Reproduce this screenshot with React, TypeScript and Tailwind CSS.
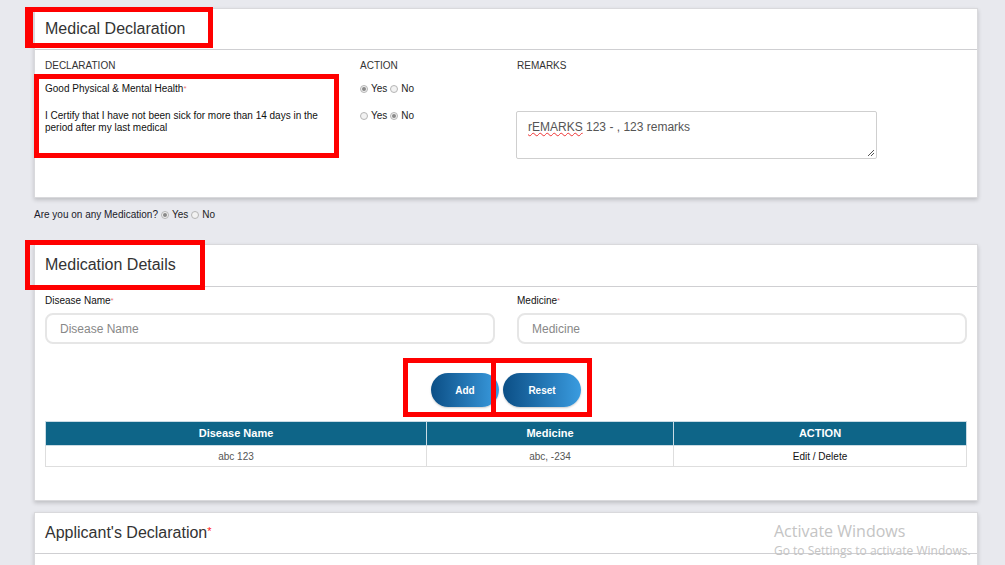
import React from "react";

function Radio({ checked }: { checked?: boolean }) {
  return (
    <span className="inline-flex h-[8px] w-[8px] items-center justify-center rounded-full border border-[#b5b5b5] bg-[#f2f2f2]">
      {checked && <span className="h-[4px] w-[4px] rounded-full bg-[#8a8a8a]" />}
    </span>
  );
}

function YesNo({ yes }: { yes: boolean }) {
  return (
    <div className="flex items-center text-[10px] leading-[12px] text-[#222]">
      <Radio checked={yes} />
      <span className="ml-[3px] mr-[3px]">Yes</span>
      <Radio checked={!yes} />
      <span className="ml-[3px]">No</span>
    </div>
  );
}

function Card({ children, className = "" }: { children: React.ReactNode; className?: string }) {
  return (
    <div className={`bg-white border border-[#d9d9dc] shadow-[0_2px_4px_rgba(0,0,0,0.18)] ${className}`}>
      {children}
    </div>
  );
}

function CardHeader({ children, h = "h-[41px]" }: { children: React.ReactNode; h?: string }) {
  return (
    <div className={`${h} flex items-center px-[10px] border-b border-[#cfcfd2] text-[16px] text-[#333]`}>
      {children}
    </div>
  );
}

function RedBox({ className }: { className: string }) {
  return <div className={`absolute border-[5px] border-[#ff0000] pointer-events-none ${className}`} />;
}

export default function App() {
  return (
    <div className="relative h-[565px] w-[1005px] overflow-hidden bg-[#e8e9ee] font-['Liberation_Sans',Arial,sans-serif]">
      <div className="pt-[8px] pl-[34px] pr-[27px]">
        {/* Medical Declaration */}
        <Card className="h-[190px]">
          <CardHeader>Medical Declaration</CardHeader>
          <div className="px-[10px] pt-[10px] text-[10px] leading-[12px] text-[#333]">
            <div className="grid grid-cols-[315px_157px_1fr]">
              <div>DECLARATION</div>
              <div>ACTION</div>
              <div>REMARKS</div>
            </div>
            <div className="mt-[11px] grid grid-cols-[315px_157px_1fr] text-[#111]">
              <div>
                Good Physical &amp; Mental Health<span className="text-[#e77] text-[8px] align-top">*</span>
              </div>
              <YesNo yes />
              <div />
            </div>
            <div className="mt-[15px] grid grid-cols-[315px_157px_1fr] text-[#111]">
              <div className="pr-[12px]">
                I Certify that I have not been sick for more than 14 days in the period after my last medical
              </div>
              <div>
                <YesNo yes={false} />
              </div>
              <div className="pt-[1px]">
                <div className="relative h-[48px] w-[361px] -ml-[1px] rounded-[2px] border border-[#cfcfcf] px-[11px] pt-[8px] text-[12px] leading-[14px] text-[#555]">
                  <span className="underline decoration-wavy decoration-[#e33] decoration-[1px]">rEMARKS</span> 123 - , 123 remarks
                  <svg className="absolute bottom-[1px] right-[1px]" width="8" height="8" viewBox="0 0 8 8">
                    <path d="M7 1 L1 7 M7 4 L4 7" stroke="#555" strokeWidth="1" />
                  </svg>
                </div>
              </div>
            </div>
          </div>
        </Card>

        {/* Medication question */}
        <div className="mt-[11px] flex items-center text-[10px] leading-[12px] text-[#1a1a2a]">
          <span className="mr-[3px]">Are you on any Medication?</span>
          <YesNo yes />
        </div>

        {/* Medication Details */}
        <Card className="mt-[23px] h-[257px]">
          <CardHeader h="h-[42px] pb-[2px]">Medication Details</CardHeader>
          <div className="px-[10px] pt-[8px]">
            <div className="grid grid-cols-2 gap-x-[22px]">
              <div>
                <div className="text-[10px] leading-[12px] text-[#111]">
                  Disease Name<span className="text-[#e77] text-[8px] align-top">*</span>
                </div>
                <div className="mt-[6px] flex h-[31px] items-center rounded-[8px] border-2 border-[#e6e6e6] px-[13px] text-[12px] text-[#888]">
                  Disease Name
                </div>
              </div>
              <div>
                <div className="text-[10px] leading-[12px] text-[#111]">
                  Medicine<span className="text-[#e77] text-[8px] align-top">*</span>
                </div>
                <div className="mt-[6px] flex h-[31px] items-center rounded-[8px] border-2 border-[#e6e6e6] px-[13px] text-[12px] text-[#888]">
                  Medicine
                </div>
              </div>
            </div>
            <div className="mt-[29px] flex justify-center gap-[4px]">
              <button className="h-[34px] w-[68px] rounded-full bg-gradient-to-r from-[#0b4f86] to-[#3a9ce0] text-[10px] font-bold text-white shadow-[0_1px_2px_rgba(0,0,0,0.2)]">
                Add
              </button>
              <button className="h-[34px] w-[78px] rounded-full bg-gradient-to-r from-[#0b4f86] to-[#3a9ce0] text-[10px] font-bold text-white shadow-[0_1px_2px_rgba(0,0,0,0.2)]">
                Reset
              </button>
            </div>
            <table className="mt-[14px] w-full border-collapse text-[10px]">
              <thead>
                <tr className="h-[24px] bg-[#0e6588] text-white">
                  <th className="w-[381px] border border-[#c9dbe4] text-[11px] font-bold">Disease Name</th>
                  <th className="w-[247px] border border-[#c9dbe4] text-[11px] font-bold">Medicine</th>
                  <th className="border border-[#c9dbe4] text-[11px] font-bold">ACTION</th>
                </tr>
              </thead>
              <tbody>
                <tr className="h-[21px]">
                  <td className="border border-[#dedede] text-center text-[#555]">abc 123</td>
                  <td className="border border-[#dedede] text-center text-[#555]">abc, -234</td>
                  <td className="border border-[#dedede] text-center text-[#111]">Edit / Delete</td>
                </tr>
              </tbody>
            </table>
          </div>
        </Card>

        {/* Applicant's Declaration */}
        <Card className="mt-[11px] h-[80px]">
          <CardHeader>
            Applicant's Declaration<span className="text-[#f22] text-[11px] self-start mt-[10px]">*</span>
          </CardHeader>
        </Card>
      </div>

      {/* annotation boxes */}
      <RedBox className="left-[25px] top-[7px] h-[41px] w-[188px] border-l-[8px]" />
      <RedBox className="left-[34px] top-[74px] h-[84px] w-[305px]" />
      <RedBox className="left-[25px] top-[240px] h-[50px] w-[180px]" />
      <RedBox className="left-[403px] top-[358px] h-[59px] w-[93px]" />
      <RedBox className="left-[491px] top-[358px] h-[59px] w-[101px]" />

      {/* windows watermark */}
      <div className="pointer-events-none absolute left-[774px] top-[520px] font-['Open_Sans','Noto_Sans',sans-serif] text-[#c4c4c4]">
        <div className="text-[16px] leading-[22px]">Activate Windows</div>
        <div className="text-[12px] leading-[18px]">Go to Settings to activate Windows.</div>
      </div>
    </div>
  );
}
